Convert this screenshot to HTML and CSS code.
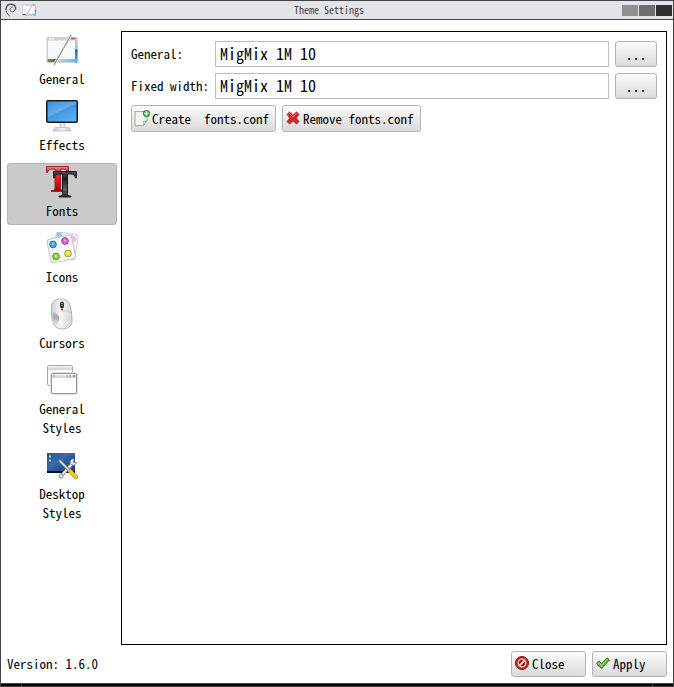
FILE: index.html
```html
<!DOCTYPE html>
<html lang="en">
<head>
    <meta charset="UTF-8">
    <meta name="viewport" content="width=device-width, initial-scale=1.0">
    <title>Theme Settings</title>
    <link rel="stylesheet" href="styles.css">
</head>
<body>
    <div class="window">
        <header class="titlebar">
            <div class="title-icons">
                <svg width="12" height="14" viewBox="0 0 12 14" fill="none" stroke="#5a5860" stroke-linecap="round">
                    <path stroke-width="1" d="M4.500 13C2 11 0.800 8.500 1 6"/>
                    <path stroke-width="1.500" d="M1 6C1.500 2.800 3.800 1 6.500 1.200C9.300 1.400 11 3.500 10.600 5.800"/>
                    <path stroke-width="1" d="M10.600 5.800C10.200 8 8 9.300 6.300 8.600C4.300 7.600 4.300 4.600 7.300 4.200"/>
                </svg>
                <svg width="14" height="14" viewBox="0 0 32 32">
                    <use href="#theme-art"/>
                </svg>
            </div>
            <h1 class="title">Theme Settings</h1>
            <div class="title-buttons">
                <button class="win-btn iconify" aria-label="Minimize"></button>
                <button class="win-btn maximize" aria-label="Maximize"></button>
                <button class="win-btn quit" aria-label="Close window"></button>
            </div>
        </header>

        <main class="content">
            <nav class="sidebar">
                <button class="tab">
                    <svg width="32" height="32" viewBox="0 0 32 32">
                        <defs>
                            <linearGradient id="blue-side" x1="0" y1="0" x2="0" y2="1">
                                <stop offset="0" stop-color="#c9cdd0"/>
                                <stop offset=".45" stop-color="#a9bccb"/>
                                <stop offset=".5" stop-color="#1767b0"/>
                                <stop offset="1" stop-color="#58b4e6"/>
                            </linearGradient>
                            <linearGradient id="task-bar" x1="0" y1="0" x2="1" y2="0">
                                <stop offset="0" stop-color="#7a8b78"/>
                                <stop offset=".3" stop-color="#2c7a2c"/>
                                <stop offset=".35" stop-color="#a9daf0"/>
                                <stop offset="1" stop-color="#6abbe6"/>
                            </linearGradient>
                        </defs>
                        <g id="theme-art">
                            <rect x="0.500" y="3" width="31" height="26" rx="1" fill="#ccd0d1"/>
                            <path d="M29 3h2.500v26H29z" fill="url(#blue-side)"/>
                            <rect x="1.500" y="25" width="29" height="3" fill="url(#task-bar)"/>
                            <rect x="2" y="6.500" width="27" height="18.500" fill="#f7f8f8"/>
                            <path d="M3 5h5" stroke="#f5f5f5" stroke-width="1.500"/>
                            <path d="M25 4.500h4" stroke="#c94a4a" stroke-width="1.500"/>
                            <path d="M25 1L8 31" stroke="#fff" stroke-width="2.500"/>
                            <path d="M25 1L8 31" stroke="#8d8d8d" stroke-width="1.300"/>
                        </g>
                    </svg>
                    <span>General</span>
                </button>

                <button class="tab">
                    <svg width="32" height="32" viewBox="0 0 32 32">
                        <defs>
                            <linearGradient id="screen" x1="0" y1="0" x2=".7" y2="1">
                                <stop offset="0" stop-color="#3a8fdc"/>
                                <stop offset=".5" stop-color="#62adea"/>
                                <stop offset=".55" stop-color="#4596de"/>
                                <stop offset="1" stop-color="#56b0f4"/>
                            </linearGradient>
                            <linearGradient id="stand" x1="0" y1="0" x2="1" y2="0">
                                <stop offset="0" stop-color="#c2c5c9"/>
                                <stop offset=".5" stop-color="#f4f5f6"/>
                                <stop offset="1" stop-color="#bfc2c6"/>
                            </linearGradient>
                        </defs>
                        <path d="M14 22h5v6h-5z" fill="url(#stand)"/>
                        <path d="M9 27.500h14l2 3.500H7z" fill="url(#stand)" stroke="#b9bcc0" stroke-width=".8"/>
                        <rect x="0" y="0" width="32" height="23" rx="2" fill="#14171b"/>
                        <rect x="1.500" y="1.500" width="29" height="20" fill="url(#screen)"/>
                    </svg>
                    <span>Effects</span>
                </button>

                <button class="tab selected" aria-current="page">
                    <svg width="32" height="32" viewBox="0 0 32 32">
                        <defs>
                            <linearGradient id="red-t" x1="0" y1="0" x2="0" y2="1">
                                <stop offset="0" stop-color="#c9a5a5"/>
                                <stop offset=".15" stop-color="#c05050"/>
                                <stop offset=".5" stop-color="#e81c20"/>
                                <stop offset="1" stop-color="#8a1010"/>
                            </linearGradient>
                            <linearGradient id="black-t" x1="0" y1="0" x2="0" y2="1">
                                <stop offset="0" stop-color="#4d4d4d"/>
                                <stop offset=".3" stop-color="#1c1c1c"/>
                                <stop offset=".7" stop-color="#606060"/>
                                <stop offset="1" stop-color="#222"/>
                            </linearGradient>
                        </defs>
                        <path d="M0.500 0.500H22.500V6.500H21.500C21 4 20 3 17.500 3H14.500V21.500C14.500 23.500 15 24.500 17.500 24.500V25.500H5.500V24.500C8.500 24.500 9 23.500 9 21.500V3H6C3.500 3 2 4 1.500 6.500H0.500Z" fill="url(#red-t)" stroke="#b01c20" stroke-width="1"/>
                        <path d="M7.500 5.500H30.500V12H29.500C29 9 27.500 8 25 8H21.500V27.500C21.500 29.500 22.500 30 25 30V31H13V30C15.500 30 16.500 29.500 16.500 27.500V8H13C10.500 8 9 9 8.500 12H7.500Z" fill="url(#black-t)" stroke="#1b1b1b" stroke-width="1"/>
                    </svg>
                    <span>Fonts</span>
                </button>

                <button class="tab">
                    <svg width="32" height="32" viewBox="0 0 32 32">
                        <g transform="rotate(8 20 11)">
                            <rect x="9" y="1" width="22" height="26" rx="3" fill="#f1f1f1" stroke="#d2d2d2"/>
                            <circle cx="12" cy="4" r="3" fill="#9fc7e8"/>
                            <circle cx="26" cy="6" r="3.500" fill="#efbcec"/>
                        </g>
                        <g transform="rotate(-12 15 18)">
                            <rect x="3" y="5" width="25" height="24" rx="3" fill="#fafafa" stroke="#c4c4c4"/>
                        </g>
                        <circle cx="7" cy="12.500" r="3.400" fill="#37a0e6" stroke="#3d78a8"/>
                        <circle cx="19" cy="9" r="3.400" fill="#e04ade" stroke="#a254a4"/>
                        <circle cx="10" cy="24.500" r="3.400" fill="#83da31" stroke="#68973d"/>
                        <circle cx="22" cy="21.500" r="3.400" fill="#e8e23b" stroke="#a39c48"/>
                        <circle cx="7" cy="12" r="1.200" fill="#8bd0fa"/>
                        <circle cx="19" cy="8.500" r="1.200" fill="#f4a3f2"/>
                        <circle cx="10" cy="24" r="1.200" fill="#c2f48f"/>
                        <circle cx="22" cy="20.500" r="1.200" fill="#faf7a2"/>
                    </svg>
                    <span>Icons</span>
                </button>

                <button class="tab">
                    <svg width="32" height="32" viewBox="0 0 32 32">
                        <defs>
                            <linearGradient id="mouse" x1="0" y1="0" x2="1" y2="0">
                                <stop offset="0" stop-color="#cfcfcf"/>
                                <stop offset=".45" stop-color="#f6f6f6"/>
                                <stop offset="1" stop-color="#d2d2d2"/>
                            </linearGradient>
                            <linearGradient id="mouse-side" x1="0" y1="0" x2="0" y2="1">
                                <stop offset="0" stop-color="#d8d8d8"/>
                                <stop offset=".5" stop-color="#a6a6a6"/>
                                <stop offset="1" stop-color="#e4e4e4"/>
                            </linearGradient>
                        </defs>
                        <path d="M14 1C8 1.500 5 4 5.500 9C6 13 5 16 6 20C7 27 10 31 16 31C23 31 27 27 26 20C25.500 14 25 10 23.500 6C22 2 19 .8 14 1Z" fill="url(#mouse)" stroke="#b5b5b5"/>
                        <path d="M6.500 12C8 15 12 15 13 19C14 23 10.500 27 9 26C6.500 22 6.500 16 6.500 12Z" fill="url(#mouse-side)"/>
                        <path d="M17 13C20 12.500 23 13 25 15" fill="none" stroke="#c8c8c8"/>
                        <rect x="14" y="3.500" width="4" height="7" rx="2" fill="#3b3b3b"/>
                        <path d="M15 5.500h2M15 7.500h2" stroke="#999" stroke-width=".7"/>
                        <rect x="15" y="10.500" width="2" height="2" fill="#e02a20"/>
                    </svg>
                    <span>Cursors</span>
                </button>

                <button class="tab">
                    <svg width="32" height="32" viewBox="0 0 32 32">
                        <defs>
                            <linearGradient id="win-bar" x1="0" y1="0" x2="0" y2="1">
                                <stop offset="0" stop-color="#f3f3f3"/>
                                <stop offset="1" stop-color="#cecece"/>
                            </linearGradient>
                        </defs>
                        <rect x="1.500" y="1.500" width="25" height="20" rx="1.500" fill="#fff" stroke="#a9a9a9"/>
                        <rect x="2" y="2" width="24" height="4" fill="url(#win-bar)"/>
                        <rect x="4.500" y="8.500" width="27" height="22" rx="2" fill="none" stroke="#dedede"/>
                        <rect x="5.500" y="9.500" width="25" height="20" rx="1.500" fill="#fff" stroke="#999"/>
                        <rect x="6" y="10" width="24" height="4" fill="url(#win-bar)"/>
                        <path d="M7 12h2M20 12h2M23 12h2" stroke="#aaa" stroke-width="1.500"/>
                        <path d="M27 12h2" stroke="#5b9fe0" stroke-width="1.800"/>
                    </svg>
                    <span>General<br>Styles</span>
                </button>

                <button class="tab">
                    <svg width="32" height="32" viewBox="0 0 32 32">
                        <defs>
                            <linearGradient id="desk" x1="0" y1="0" x2="1" y2="1">
                                <stop offset="0" stop-color="#1f4a87"/>
                                <stop offset=".4" stop-color="#2f67a8"/>
                                <stop offset="1" stop-color="#16366a"/>
                            </linearGradient>
                        </defs>
                        <rect x="1" y="4" width="28" height="20" fill="url(#desk)"/>
                        <path d="M29 4L12 16L2 20V4Z" fill="#3b74b4" opacity=".35"/>
                        <rect x="1" y="22" width="28" height="2" fill="#0b0f18"/>
                        <path d="M3 7.500h2M3 11.500h2" stroke="#b9d6cb" stroke-width="2"/>
                        <path d="M15 27L27 14" stroke="#7d8083" stroke-width="3.500" stroke-linecap="round"/>
                        <path d="M15 27L27 14" stroke="#e5e7e8" stroke-width="2" stroke-linecap="round"/>
                        <path d="M28 10C25 9.500 23.500 12 24.500 14.500C26 17 30 16.500 30.500 13.500L27.500 13.500Z" fill="#eceeef" stroke="#868a8d" stroke-width=".8"/>
                        <circle cx="15" cy="27" r="2" fill="#eee" stroke="#85898c"/>
                        <path d="M14 12L24 22" stroke="#777b80" stroke-width="3" stroke-linecap="round"/>
                        <path d="M14 12L24 22" stroke="#f0f1f2" stroke-width="1.500" stroke-linecap="round"/>
                        <path d="M24 22L30 28" stroke="#b78906" stroke-width="4.500" stroke-linecap="round"/>
                        <path d="M24 22L30 28" stroke="#f5cd28" stroke-width="3" stroke-linecap="round"/>
                    </svg>
                    <span>Desktop<br>Styles</span>
                </button>
            </nav>

            <section class="panel">
                <div class="font-row">
                    <label for="general-font">General:</label>
                    <input type="text" id="general-font" value="MigMix 1M 10">
                    <button class="btn browse" aria-label="Choose general font">...</button>
                </div>
                <div class="font-row">
                    <label for="fixed-font">Fixed width:</label>
                    <input type="text" id="fixed-font" value="MigMix 1M 10">
                    <button class="btn browse" aria-label="Choose fixed width font">...</button>
                </div>
                <div class="actions">
                    <button class="btn">
                        <svg width="16" height="16" viewBox="0 0 16 16">
                            <path d="M1 1.500h12v9L9.500 15.500H1z" fill="#f4f5f2" stroke="#a5a8a2"/>
                            <path d="M13 10.500C12 12 10.500 11.500 9 11.500C10 13 9.800 14.500 9 15.500Z" fill="#fff" stroke="#a5a8a2" stroke-width=".8"/>
                            <circle cx="12.500" cy="3.500" r="3.500" fill="#13a013"/>
                            <path d="M12.500 1v5M10 3.500h5" stroke="#fff" stroke-width="1.400"/>
                        </svg>
                        <span class="keep">Create  fonts.conf</span>
                    </button>
                    <button class="btn">
                        <svg width="16" height="16" viewBox="0 0 16 16">
                            <path d="M2 4.500L4.500 2L8 5.200L11.500 2L14 4.500L11 8L14 11.500L11.500 14L8 10.800L4.500 14L2 11.500L5 8Z" fill="#d8262b" stroke="#8f1b1b" stroke-width=".8" stroke-linejoin="round"/>
                            <path d="M3.500 4.500L4.500 3.500L8 6.800L11.500 3.500" fill="none" stroke="#f08080"/>
                        </svg>
                        <span>Remove fonts.conf</span>
                    </button>
                </div>
            </section>
        </main>

        <footer class="footer">
            <span class="version">Version: 1.6.0</span>
            <button class="btn wide">
                <svg width="16" height="16" viewBox="0 0 16 16">
                    <circle cx="8" cy="8" r="6.500" fill="#c41e1e" stroke="#8c1515"/>
                    <circle cx="8" cy="8" r="3.800" fill="#9c1717" stroke="#f0dcdc" stroke-width="1.300"/>
                    <path d="M5.500 10.500L10.500 5.500" stroke="#f0dcdc" stroke-width="1.800"/>
                </svg>
                <span>Close</span>
            </button>
            <button class="btn wide">
                <svg width="16" height="16" viewBox="0 0 16 16">
                    <path d="M1.500 8.500L4 6L6.500 8.800L12 2.800L14.500 5L6.500 13.500Z" fill="#65bd3c" stroke="#33761d" stroke-linejoin="round"/>
                    <path d="M3.200 8.300L4 7.500L6.500 10.300L12 4.500" fill="none" stroke="#a8e084"/>
                </svg>
                <span>Apply</span>
            </button>
        </footer>

        <div class="handle">
            <div class="grip"></div>
            <div class="bar"></div>
            <div class="grip"></div>
        </div>
    </div>
</body>
</html>
```
FILE: styles.css
```css
* {
    box-sizing: border-box;
}

body {
    margin: 0;
    font-family: "Noto Sans Mono CJK JP", "Liberation Mono", monospace;
    font-size: 13px;
    line-height: 19px;
    color: #000;
    background-color: #fff;
}

button,
input {
    font: inherit;
    color: inherit;
    margin: 0;
}

svg {
    display: block;
    flex: none;
}

.window {
    display: flex;
    flex-direction: column;
    min-height: 100vh;
    border: 1px solid #444;
}

/* title bar */
.titlebar {
    display: flex;
    align-items: center;
    height: 19px;
    padding: 0 1px 0 4px;
    background-color: #e3e3ea;
    border-bottom: 1px solid #444;
}

.title-icons {
    display: flex;
    gap: 5px;
}

.title {
    flex: 1;
    margin: 0;
    font-size: 10px;
    font-weight: normal;
    line-height: 18px;
    text-align: center;
    color: #444;
}

.title-buttons {
    display: flex;
    gap: 1px;
}

.win-btn {
    width: 16px;
    height: 11px;
    padding: 0;
    border: none;
}

.iconify {
    background-color: #909090;
}

.maximize {
    background-color: #6e6e6e;
}

.quit {
    background-color: #303030;
}

/* tabs and panel */
.content {
    display: flex;
    flex: 1;
    gap: 4px;
    padding: 11px 6px 6px;
}

.sidebar {
    display: flex;
    flex-direction: column;
    gap: 4px;
    width: 110px;
}

.tab {
    display: flex;
    flex-direction: column;
    align-items: center;
    gap: 3px;
    padding: 2px 2px 4px;
    border: 1px solid transparent;
    border-radius: 3px;
    background: none;
}

.tab.selected {
    background-color: #cacaca;
    border-color: #b4b4b4;
}

.panel {
    flex: 1;
    display: flex;
    flex-direction: column;
    gap: 6px;
    padding: 9px;
    border: 1px solid #000;
}

.font-row {
    display: grid;
    grid-template-columns: 78px 1fr 42px;
    gap: 6px;
    align-items: center;
    line-height: 17px;
    white-space: nowrap;
}

.font-row label {
    padding-bottom: 2px;
}

.font-row input {
    width: 100%;
    height: 26px;
    padding: 0 4px 2px;
    font-size: 16px;
    border: 1px solid #bebebe;
    background-color: #fff;
}

.actions {
    display: flex;
    gap: 6px;
}

.btn {
    display: flex;
    align-items: center;
    gap: 2px;
    height: 27px;
    padding: 0 6px 1px 2px;
    border: 1px solid #b4b4b4;
    border-radius: 3px;
    background: linear-gradient(#fcfcfc, #dadada);
    white-space: nowrap;
}

.btn.browse {
    justify-content: center;
    height: 26px;
    padding: 0;
    font-size: 14px;
}

.keep {
    white-space: pre;
}

/* bottom */
.footer {
    display: flex;
    align-items: center;
    gap: 6px;
    padding: 0 6px 6px;
}

.version {
    flex: 1;
    padding-bottom: 2px;
}

.btn.wide {
    width: 75px;
    height: 26px;
    padding-bottom: 2px;
}

.handle {
    display: flex;
    height: 3px;
    border-top: 1px solid #444;
    background-color: #000;
}

.grip {
    width: 20px;
}

.bar {
    flex: 1;
    border: solid #444;
    border-width: 0 1px;
}
```
